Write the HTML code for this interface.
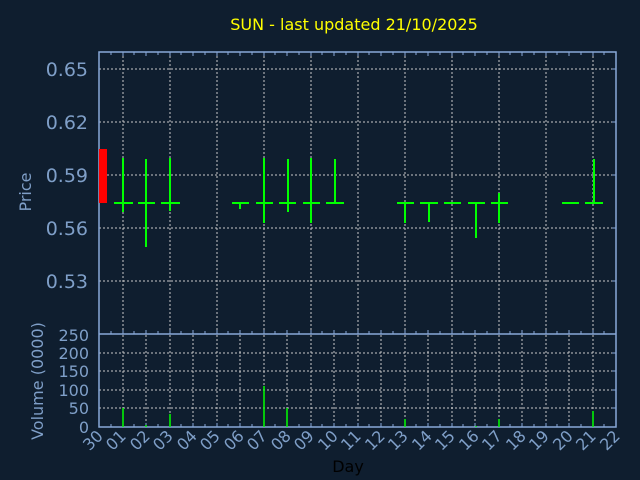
<!DOCTYPE html>
<html><head><style>
html,body{margin:0;padding:0;background:#0f1e2f;}
svg{display:block;font-family:"DejaVu Sans","Liberation Sans",sans-serif;}
</style></head><body>
<svg width="640" height="480" viewBox="0 0 640 480">
<rect width="640" height="480" fill="#0f1e2f"/>
<text x="354" y="30" fill="#ffff00" font-size="16" text-anchor="middle">SUN - last updated 21/10/2025</text>
<g stroke="#c8c8c8" stroke-width="1" stroke-dasharray="2,2" fill="none">
<path d="M99 69H616M99 122H616M99 175H616M99 228H616M99 281H616"/>
<path d="M123 52V334M170 52V334M217 52V334M264 52V334M311 52V334M358 52V334M405 52V334M452 52V334M499 52V334M546 52V334M593 52V334"/>
<path d="M99 353H616M99 371H616M99 390H616M99 408H616"/>
<path d="M123 335V427M146 335V427M170 335V427M193 335V427M217 335V427M240 335V427M264 335V427M287 335V427M311 335V427M334 335V427M358 335V427M381 335V427M405 335V427M428 335V427M452 335V427M475 335V427M499 335V427M522 335V427M546 335V427M569 335V427M593 335V427"/>
</g>
<g stroke="#88a8d8" stroke-width="1.5" fill="none">
<rect x="99" y="52" width="517" height="375"/>
<path d="M99 334H616"/>
</g>
<g stroke="#88a8d8" stroke-width="1">
<path d="M111 52v3M123 52v4M134 52v3M146 52v4M158 52v3M170 52v4M181 52v3M193 52v4M205 52v3M217 52v4M228 52v3M240 52v4M252 52v3M264 52v4M275 52v3M287 52v4M299 52v3M311 52v4M322 52v3M334 52v4M346 52v3M358 52v4M369 52v3M381 52v4M393 52v3M405 52v4M416 52v3M428 52v4M440 52v3M452 52v4M463 52v3M475 52v4M487 52v3M499 52v4M510 52v3M522 52v4M534 52v3M546 52v4M557 52v3M569 52v4M581 52v3M593 52v4M604 52v3"/>
<path d="M111 334v-3M123 334v-4M134 334v-3M146 334v-4M158 334v-3M170 334v-4M181 334v-3M193 334v-4M205 334v-3M217 334v-4M228 334v-3M240 334v-4M252 334v-3M264 334v-4M275 334v-3M287 334v-4M299 334v-3M311 334v-4M322 334v-3M334 334v-4M346 334v-3M358 334v-4M369 334v-3M381 334v-4M393 334v-3M405 334v-4M416 334v-3M428 334v-4M440 334v-3M452 334v-4M463 334v-3M475 334v-4M487 334v-3M499 334v-4M510 334v-3M522 334v-4M534 334v-3M546 334v-4M557 334v-3M569 334v-4M581 334v-3M593 334v-4M604 334v-3"/>
<path d="M111 427v-3M123 427v-4M134 427v-3M146 427v-4M158 427v-3M170 427v-4M181 427v-3M193 427v-4M205 427v-3M217 427v-4M228 427v-3M240 427v-4M252 427v-3M264 427v-4M275 427v-3M287 427v-4M299 427v-3M311 427v-4M322 427v-3M334 427v-4M346 427v-3M358 427v-4M369 427v-3M381 427v-4M393 427v-3M405 427v-4M416 427v-3M428 427v-4M440 427v-3M452 427v-4M463 427v-3M475 427v-4M487 427v-3M499 427v-4M510 427v-3M522 427v-4M534 427v-3M546 427v-4M557 427v-3M569 427v-4M581 427v-3M593 427v-4M604 427v-3"/>
<path d="M616 69h-4M616 122h-4M616 175h-4M616 228h-4M616 281h-4M616 353h-4M616 371h-4M616 390h-4M616 408h-4"/>
</g>
<rect x="99" y="149" width="8" height="54" fill="#ff0000"/>
<g stroke="#00ff00" stroke-width="2" fill="none">
<path d="M114 203h19M123 158v54"/>
<path d="M138 203h17M146 159v88"/>
<path d="M161 203h19M170 158v53"/>
<path d="M232 203h17M240 203v6"/>
<path d="M256 203h17M264 158v65"/>
<path d="M279 203h17M288 159v53"/>
<path d="M303 203h17M311 158v65"/>
<path d="M326 203h18M335 159v44"/>
<path d="M397 203h17M405 203v20"/>
<path d="M420 203h18M429 203v19"/>
<path d="M444 203h17"/>
<path d="M468 203h17M476 203v35"/>
<path d="M491 203h17M499 193v30"/>
<path d="M562 203h17"/>
<path d="M585 203h18M594 159v44"/>
</g>
<g stroke="#00ff00" stroke-width="1.5">
<path d="M123 427v-19M146 427v-2M170 427v-13M264 427v-41M287 427v-19M405 427v-8M476 427v-1M499 427v-8M593 427v-16"/>
</g>
<g fill="#7f9fc8" font-size="19" text-anchor="end">
<text x="88" y="76">0.65</text>
<text x="88" y="129">0.62</text>
<text x="88" y="182">0.59</text>
<text x="88" y="235">0.56</text>
<text x="88" y="288">0.53</text>
</g>
<g fill="#7f9fc8" font-size="16" text-anchor="end">
<text x="89" y="341">250</text>
<text x="89" y="359">200</text>
<text x="89" y="377">150</text>
<text x="89" y="396">100</text>
<text x="89" y="414">50</text>
<text x="89" y="433">0</text>
</g>
<text transform="translate(31,192) rotate(-90)" fill="#7f9fc8" font-size="16" text-anchor="middle">Price</text>
<text transform="translate(43,381) rotate(-90)" fill="#7f9fc8" font-size="16" text-anchor="middle">Volume (0000)</text>
<g fill="#7f9fc8" font-size="16" text-anchor="end">
<text transform="translate(104,437) rotate(-45)">30</text>
<text transform="translate(127,437) rotate(-45)">01</text>
<text transform="translate(151,437) rotate(-45)">02</text>
<text transform="translate(174,437) rotate(-45)">03</text>
<text transform="translate(198,437) rotate(-45)">04</text>
<text transform="translate(221,437) rotate(-45)">05</text>
<text transform="translate(245,437) rotate(-45)">06</text>
<text transform="translate(268,437) rotate(-45)">07</text>
<text transform="translate(292,437) rotate(-45)">08</text>
<text transform="translate(315,437) rotate(-45)">09</text>
<text transform="translate(339,437) rotate(-45)">10</text>
<text transform="translate(362,437) rotate(-45)">11</text>
<text transform="translate(386,437) rotate(-45)">12</text>
<text transform="translate(409,437) rotate(-45)">13</text>
<text transform="translate(433,437) rotate(-45)">14</text>
<text transform="translate(456,437) rotate(-45)">15</text>
<text transform="translate(480,437) rotate(-45)">16</text>
<text transform="translate(503,437) rotate(-45)">17</text>
<text transform="translate(527,437) rotate(-45)">18</text>
<text transform="translate(550,437) rotate(-45)">19</text>
<text transform="translate(574,437) rotate(-45)">20</text>
<text transform="translate(597,437) rotate(-45)">21</text>
<text transform="translate(621,437) rotate(-45)">22</text>
</g>
<text x="348" y="472" fill="#000000" font-size="16" text-anchor="middle">Day</text>
</svg>
</body></html>
